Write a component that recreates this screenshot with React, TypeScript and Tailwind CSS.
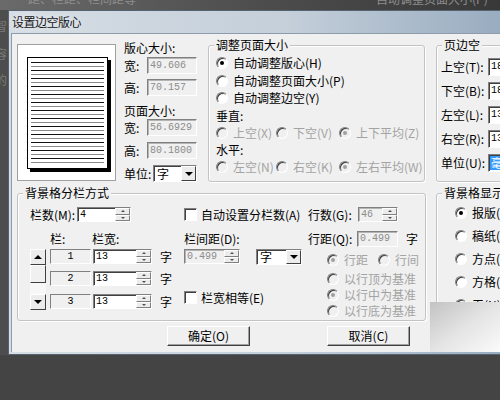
import React from 'react';

type RadioProps = { label: string; checked?: boolean; disabled?: boolean };

function Radio({ label, checked = false, disabled = false }: RadioProps) {
  return (
    <span className="flex items-center whitespace-nowrap">
      <span
        className={`flex items-center justify-center w-[12px] h-[12px] shrink-0 rounded-full border border-t-[#808080] border-l-[#808080] border-b-white border-r-white shadow-[inset_1px_1px_0_#404040] ${
          disabled ? 'bg-[#f0f0f0]' : 'bg-white'
        }`}
      >
        {checked && <span className={`w-[4px] h-[4px] rounded-full ${disabled ? 'bg-[#a0a0a0]' : 'bg-black'}`} />}
      </span>
      <span className={`ml-[5px] ${disabled ? 'text-[#a3a3a3]' : 'text-black'}`}>{label}</span>
    </span>
  );
}

function Check({ label }: { label: string }) {
  return (
    <span className="flex items-center whitespace-nowrap">
      <span className="w-[13px] h-[13px] shrink-0 bg-white border border-t-[#808080] border-l-[#808080] border-b-white border-r-white shadow-[inset_1px_1px_0_#404040]" />
      <span className="ml-[4px]">{label}</span>
    </span>
  );
}

function Spin() {
  return (
    <span className="w-[15px] shrink-0 flex flex-col">
      <span className="flex-1 flex items-center justify-center bg-[#ececec] border border-t-white border-l-white border-b-[#808080] border-r-[#808080]">
        <span className="w-0 h-0 border-x-[2px] border-x-transparent border-b-[2px] border-b-[#505050]" />
      </span>
      <span className="flex-1 flex items-center justify-center bg-[#ececec] border border-t-white border-l-white border-b-[#808080] border-r-[#808080]">
        <span className="w-0 h-0 border-x-[2px] border-x-transparent border-t-[2px] border-t-[#505050]" />
      </span>
    </span>
  );
}

type FieldProps = { className: string; value: React.ReactNode; disabled?: boolean; spin?: boolean };

function Field({ className, value, disabled = false, spin = false }: FieldProps) {
  return (
    <div
      className={`flex items-stretch shrink-0 overflow-hidden border border-t-[#808080] border-l-[#808080] border-b-white border-r-white ${
        disabled ? 'bg-[#f0f0f0] text-[#8c8c8c] shadow-[inset_1px_1px_0_#b4b4b4]' : 'bg-white text-black shadow-[inset_1px_1px_0_#404040]'
      } ${className}`}
    >
      <span className="flex-1 flex items-center pl-[2px] whitespace-nowrap overflow-hidden font-['Liberation_Mono',monospace] text-[10px]">
        {value}
      </span>
      {spin && <Spin />}
    </div>
  );
}

function Select({ className, value }: { className: string; value: string }) {
  return (
    <div className={`flex items-stretch shrink-0 bg-white border border-t-[#808080] border-l-[#808080] border-b-white border-r-white shadow-[inset_1px_1px_0_#404040] ${className}`}>
      <span className="flex-1 flex items-center pl-[3px]">{value}</span>
      <span className="w-[15px] flex items-center justify-center bg-[#ececec] border border-t-white border-l-white border-b-[#404040] border-r-[#404040]">
        <span className="w-0 h-0 border-x-[4px] border-x-transparent border-t-[4px] border-t-black" />
      </span>
    </div>
  );
}

function Group({ label, className, children }: { label: string; className: string; children: React.ReactNode }) {
  return (
    <div className={`relative shrink-0 border border-[#c3c3c3] rounded-[3px] shadow-[inset_1px_1px_0_#fff,1px_1px_0_#fff] ${className}`}>
      <span className="absolute -top-[9px] left-[5px] px-[2px] bg-[#f0f0f0] whitespace-nowrap">{label}</span>
      {children}
    </div>
  );
}

function Btn({ label }: { label: string }) {
  return (
    <div className="w-[83px] h-[20px] shrink-0 flex items-center justify-center bg-[#f0f0f0] border border-t-white border-l-white border-b-[#404040] border-r-[#404040] shadow-[inset_-1px_-1px_0_#a0a0a0]">
      {label}
    </div>
  );
}

function NumBox({ n }: { n: string }) {
  return (
    <div className="w-[41px] h-[15px] shrink-0 flex items-center justify-center bg-[#f0f0f0] border border-t-[#808080] border-l-[#808080] border-b-white border-r-white font-['Liberation_Mono',monospace] text-[10px]">
      {n}
    </div>
  );
}

function ScrollBtn({ up }: { up: boolean }) {
  return (
    <div className="h-[16px] flex items-center justify-center bg-[#ececec] border border-t-white border-l-white border-b-[#404040] border-r-[#404040]">
      {up ? (
        <span className="w-0 h-0 border-x-[4px] border-x-transparent border-b-[4px] border-b-black" />
      ) : (
        <span className="w-0 h-0 border-x-[4px] border-x-transparent border-t-[4px] border-t-black" />
      )}
    </div>
  );
}

export default function App() {
  const lines = Array.from({ length: 26 }, (_, i) => i);

  return (
    <div className="relative w-[500px] h-[400px] overflow-hidden bg-[#444444] font-['Noto_Sans_CJK_SC',sans-serif] text-[12px] leading-[16px] text-black">
      {/* window behind the glass frame */}
      <div className="h-[10px] overflow-hidden flex bg-gradient-to-r from-[#6a6a6a] via-[#4e4e4e] to-[#383838] text-[#8e8e8e]">
        <span className="-mt-[9px] ml-[28px] whitespace-nowrap">距、栏距、栏间距等</span>
        <span className="-mt-[9px] ml-[240px] whitespace-nowrap">自动调整页面大小(P)</span>
      </div>

      <div className="flex">
        <div className="w-[8px] h-[345px] shrink-0 overflow-hidden flex flex-col bg-[#4d4d4d] text-[#7a7a7a]">
          <span className="-ml-[5px] mt-[8px]">智</span>
          <span className="-ml-[5px] mt-[12px]">容</span>
          <span className="-ml-[5px] mt-[10px]">的</span>
        </div>

        {/* dialog */}
        <div className="w-[560px] h-[345px] shrink-0 flex flex-col border border-[#55626f] bg-gradient-to-r from-[#d6dde4] via-[#c4cfda] to-[#8ca2b8]">
          <div className="h-[22px] flex items-center pl-[3px] tracking-[-0.5px] text-[#151515] [text-shadow:0_0_6px_rgba(255,255,255,0.95)]">
            设置边空版心
          </div>

          <div className="flex-1 mx-[2px] mb-[2px] flex flex-col pl-[5px] pt-[6px] bg-[#f0f0f0] border-t border-l border-[#8d9cab]">
            {/* top part */}
            <div className="flex items-start">
              {/* page preview */}
              <div className="mt-[4px] w-[99px] h-[137px] shrink-0 pl-[9px] pt-[12px] bg-white border border-[#a0a0a0]">
                <div className="w-[81px] h-[112px] flex flex-col gap-[3px] px-[3px] pt-[4px] bg-white border border-black shadow-[3px_3px_0_#000]">
                  {lines.map((i) => (
                    <div key={i} className={`h-[1px] shrink-0 ${i % 2 ? 'bg-[#8a8a8a]' : 'bg-[#111]'}`} />
                  ))}
                </div>
              </div>

              {/* sizes */}
              <div className="ml-[8px] w-[74px] shrink-0 flex flex-col">
                <div className="h-[16px]">版心大小:</div>
                <div className="mt-[1px] flex items-center">
                  <span className="w-[23px]">宽:</span>
                  <Field className="w-[50px] h-[17px]" value="49.606" disabled />
                </div>
                <div className="mt-[5px] flex items-center">
                  <span className="w-[23px]">高:</span>
                  <Field className="w-[50px] h-[17px]" value="70.157" disabled />
                </div>
                <div className="mt-[7px] h-[16px]">页面大小:</div>
                <div className="flex items-center">
                  <span className="w-[23px]">宽:</span>
                  <Field className="w-[50px] h-[17px]" value="56.6929" disabled />
                </div>
                <div className="mt-[6px] flex items-center">
                  <span className="w-[23px]">高:</span>
                  <Field className="w-[50px] h-[17px]" value="80.1800" disabled />
                </div>
                <div className="mt-[6px] flex items-center">
                  <span className="w-[29px]">单位:</span>
                  <Select className="w-[44px] h-[17px]" value="字" />
                </div>
              </div>

              {/* page size adjust */}
              <Group label="调整页面大小" className="ml-[10px] mt-[5px] w-[217px] h-[137px]">
                <div className="flex flex-col pl-[7px] pt-[8px]">
                  <div className="h-[18px] flex items-center"><Radio label="自动调整版心(H)" checked /></div>
                  <div className="h-[17px] flex items-center"><Radio label="自动调整页面大小(P)" /></div>
                  <div className="h-[18px] flex items-center"><Radio label="自动调整边空(Y)" /></div>
                  <div className="h-[17px] flex items-center">垂直:</div>
                  <div className="h-[18px] flex items-center">
                    <div className="w-[60px]"><Radio label="上空(X)" disabled /></div>
                    <div className="w-[63px]"><Radio label="下空(V)" disabled /></div>
                    <Radio label="上下平均(Z)" checked disabled />
                  </div>
                  <div className="h-[16px] flex items-center">水平:</div>
                  <div className="h-[17px] flex items-center">
                    <div className="w-[60px]"><Radio label="左空(N)" disabled /></div>
                    <div className="w-[63px]"><Radio label="右空(K)" disabled /></div>
                    <Radio label="左右平均(W)" checked disabled />
                  </div>
                </div>
              </Group>

              {/* margins */}
              <Group label="页边空" className="ml-[11px] mt-[5px] w-[120px] h-[137px]">
                <div className="flex flex-col pl-[4px] pt-[9px]">
                  {[
                    ['上空(T):', '18.0'],
                    ['下空(B):', '18.0'],
                    ['左空(L):', '13.0'],
                    ['右空(R):', '13.0'],
                  ].map(([l, v]) => (
                    <div key={l} className="h-[24px] flex items-center">
                      <span className="w-[47px] whitespace-nowrap">{l}</span>
                      <Field className="w-[60px] h-[18px]" value={v} />
                    </div>
                  ))}
                  <div className="h-[24px] flex items-center">
                    <span className="w-[47px] whitespace-nowrap">单位(U):</span>
                    <div className="w-[60px] h-[18px] flex items-center pl-[1px] bg-white border border-t-[#808080] border-l-[#808080] border-b-white border-r-white shadow-[inset_1px_1px_0_#404040]">
                      <span className="bg-[#3399ff] text-white leading-[14px] px-[1px]">毫米</span>
                    </div>
                  </div>
                </div>
              </Group>
            </div>

            {/* bottom part */}
            <div className="mt-[11px] flex items-start">
              <Group label="背景格分栏方式" className="w-[409px] h-[128px]">
                <div className="flex pl-[12px] pt-[13px]">
                  {/* columns */}
                  <div className="w-[154px] shrink-0 flex flex-col">
                    <div className="h-[15px] flex items-center">
                      <span className="w-[47px] whitespace-nowrap">栏数(M):</span>
                      <Field className="w-[54px] h-[15px]" value="4" spin />
                    </div>
                    <div className="mt-[9px] h-[16px] flex items-center">
                      <span className="w-[62px] pl-[20px]">栏:</span>
                      <span>栏宽:</span>
                    </div>
                    <div className="mt-[2px] flex">
                      <div className="w-[16px] h-[61px] flex flex-col">
                        <ScrollBtn up />
                        <div className="h-[18px] bg-[#f0f0f0] border border-t-white border-l-white border-b-[#404040] border-r-[#404040]" />
                        <div className="flex-1 bg-[#f7f7f7]" />
                        <ScrollBtn up={false} />
                      </div>
                      <div className="ml-[4px] flex flex-col">
                        {['1', '2', '3'].map((n, i) => (
                          <div key={n} className={`h-[15px] flex items-center ${i === 1 ? 'mt-[7px]' : i === 2 ? 'mt-[8px]' : ''}`}>
                            <NumBox n={n} />
                            <Field className="ml-[2px] w-[59px] h-[15px]" value="13" spin />
                            <span className="ml-[8px]">字</span>
                          </div>
                        ))}
                      </div>
                    </div>
                  </div>

                  <div className="w-[124px] shrink-0 flex flex-col">
                    <div className="h-[15px] flex items-center"><Check label="自动设置分栏数(A)" /></div>
                    <div className="mt-[9px] h-[16px] flex items-center">栏间距(D):</div>
                    <div className="mt-[2px] h-[15px] flex items-center">
                      <Field className="w-[56px] h-[15px]" value="0.499" disabled spin />
                      <Select className="ml-[16px] w-[46px] h-[16px]" value="字" />
                    </div>
                    <div className="mt-[26px] h-[15px] flex items-center"><Check label="栏宽相等(E)" /></div>
                  </div>

                  <div className="flex flex-col">
                    <div className="h-[15px] flex items-center">
                      <span className="w-[50px] whitespace-nowrap">行数(G):</span>
                      <Field className="w-[40px] h-[15px]" value="46" disabled spin />
                    </div>
                    <div className="mt-[9px] h-[16px] flex items-center">
                      <span className="w-[49px] whitespace-nowrap">行距(Q):</span>
                      <Field className="w-[41px] h-[16px]" value="0.499" disabled />
                      <span className="ml-[8px]">字</span>
                    </div>
                    <div className="mt-[5px] h-[16px] pl-[19px] flex items-center">
                      <div className="w-[51px]"><Radio label="行距" checked disabled /></div>
                      <Radio label="行间" disabled />
                    </div>
                    <div className="mt-[3px] h-[16px] pl-[19px] flex items-center"><Radio label="以行顶为基准" disabled /></div>
                    <div className="h-[16px] pl-[19px] flex items-center"><Radio label="以行中为基准" checked disabled /></div>
                    <div className="h-[16px] pl-[19px] flex items-center"><Radio label="以行底为基准" disabled /></div>
                  </div>
                </div>
              </Group>

              <Group label="背景格显示方式" className="ml-[10px] w-[120px] h-[128px]">
                <div className="flex flex-col pl-[18px] pt-[7px]">
                  <div className="h-[23px] flex items-center"><Radio label="报版(B)" checked /></div>
                  <div className="h-[23px] flex items-center"><Radio label="稿纸(G)" /></div>
                  <div className="h-[23px] flex items-center"><Radio label="方点(D)" /></div>
                  <div className="h-[23px] flex items-center"><Radio label="方格(F)" /></div>
                  <div className="h-[23px] flex items-center"><Radio label="无(N)" /></div>
                </div>
              </Group>
            </div>

            {/* buttons */}
            <div className="mt-[5px] flex">
              <div className="ml-[150px]"><Btn label="确定(O)" /></div>
              <div className="ml-[77px]"><Btn label="取消(C)" /></div>
            </div>
          </div>
        </div>
      </div>

      {/* glare lying over the lower right corner */}
      <div className="absolute left-[430px] top-[302px] w-[70px] h-[50px] bg-gradient-to-br from-[#c2c2c2] via-[#e4e4e4] to-[#fbfbfb]" />
    </div>
  );
}
